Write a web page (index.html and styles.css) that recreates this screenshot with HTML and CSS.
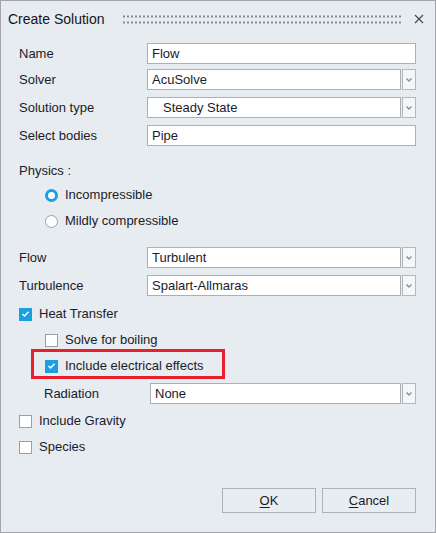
FILE: index.html
```html
<!DOCTYPE html>
<html>
<head>
<meta charset="utf-8">
<link rel="stylesheet" href="styles.css">
</head>
<body>
<div class="window">
  <div class="titlebar">
    <span class="title">Create Solution</span>
    <span class="grip"></span>
    <svg class="close" width="10" height="10" viewBox="0 0 10 10"><path d="M1 1L9 9M9 1L1 9" stroke="#444" stroke-width="1.1" fill="none"/></svg>
  </div>
  <div class="content">
    <div class="row r-name">
      <span class="label">Name</span>
      <div class="input">Flow</div>
    </div>
    <div class="row r-solver">
      <span class="label">Solver</span>
      <div class="combo"><div class="input">AcuSolve</div><div class="drop"><svg width="8" height="6" viewBox="0 0 8 6"><path d="M1.5 1.5L4 4L6.5 1.5" stroke="#8a8f94" stroke-width="1.4" fill="none"/></svg></div></div>
    </div>
    <div class="row r-type">
      <span class="label">Solution type</span>
      <div class="combo"><div class="input indent">Steady State</div><div class="drop"><svg width="8" height="6" viewBox="0 0 8 6"><path d="M1.5 1.5L4 4L6.5 1.5" stroke="#8a8f94" stroke-width="1.4" fill="none"/></svg></div></div>
    </div>
    <div class="row r-bodies">
      <span class="label">Select bodies</span>
      <div class="input">Pipe</div>
    </div>

    <div class="plain physics">Physics :</div>
    <div class="opt sub r-inc"><span class="radio on"></span><span>Incompressible</span></div>
    <div class="opt sub r-mild"><span class="radio"></span><span>Mildly compressible</span></div>

    <div class="row r-flow">
      <span class="label">Flow</span>
      <div class="combo"><div class="input">Turbulent</div><div class="drop"><svg width="8" height="6" viewBox="0 0 8 6"><path d="M1.5 1.5L4 4L6.5 1.5" stroke="#8a8f94" stroke-width="1.4" fill="none"/></svg></div></div>
    </div>
    <div class="row r-turb">
      <span class="label">Turbulence</span>
      <div class="combo"><div class="input">Spalart-Allmaras</div><div class="drop"><svg width="8" height="6" viewBox="0 0 8 6"><path d="M1.5 1.5L4 4L6.5 1.5" stroke="#8a8f94" stroke-width="1.4" fill="none"/></svg></div></div>
    </div>

    <div class="opt r-heat"><span class="check on"><svg width="9" height="8" viewBox="0 0 9 8"><path d="M1.5 4L3.6 6L7.5 1.8" stroke="#fff" stroke-width="1.5" fill="none"/></svg></span><span>Heat Transfer</span></div>
    <div class="opt sub r-boil"><span class="check"></span><span>Solve for boiling</span></div>
    <div class="highlight-wrap">
      <div class="highlight"></div>
      <div class="opt sub r-elec"><span class="check on"><svg width="9" height="8" viewBox="0 0 9 8"><path d="M1.5 4L3.6 6L7.5 1.8" stroke="#fff" stroke-width="1.5" fill="none"/></svg></span><span>Include electrical effects</span></div>
    </div>
    <div class="row r-rad">
      <span class="label sublabel">Radiation</span>
      <div class="combo"><div class="input">None</div><div class="drop"><svg width="8" height="6" viewBox="0 0 8 6"><path d="M1.5 1.5L4 4L6.5 1.5" stroke="#8a8f94" stroke-width="1.4" fill="none"/></svg></div></div>
    </div>
    <div class="opt r-grav"><span class="check"></span><span>Include Gravity</span></div>
    <div class="opt r-spec"><span class="check"></span><span>Species</span></div>

    <div class="buttons">
      <div class="btn"><u>O</u>K</div>
      <div class="btn"><u>C</u>ancel</div>
    </div>
  </div>
</div>
</body>
</html>
```
FILE: styles.css
```css
html, body {
  margin: 0;
  padding: 0;
  background: #e6ecf0;
}
body {
  font-family: "Liberation Sans", Arial, sans-serif;
  font-size: 13px;
  color: #1b1b2b;
}
.window {
  width: 436px;
  height: 533px;
  box-sizing: border-box;
  border: 1px solid #a2a6aa;
  background: #e6ecf0;
  display: flex;
  flex-direction: column;
}
.titlebar {
  height: 37px;
  display: flex;
  align-items: center;
  padding: 0 11px 0 7px;
  box-sizing: border-box;
}
.title {
  font-size: 14px;
  color: #151520;
  padding-bottom: 1px;
}
.grip {
  flex: 1;
  height: 9px;
  margin: 0 12px 0 17px;
  background-image: radial-gradient(circle, #8c8c8c 0.8px, transparent 1.2px);
  background-size: 4px 6px;
  background-position: 0 -1.5px;
}
.close {
  display: block;
  margin-bottom: 2px;
}
.content {
  padding: 4px 19px 0 18px;
  display: flex;
  flex-direction: column;
  flex: 1;
}
.row {
  display: flex;
  align-items: center;
  height: 21px;
}
.label {
  width: 128px;
  flex: none;
  padding-bottom: 1px;
}
.sublabel {
  width: 106px;
  padding-left: 25px;
}
.input {
  flex: 1;
  height: 21px;
  box-sizing: border-box;
  border: 1px solid #aab0b5;
  background: #fff;
  padding: 0 4px;
  display: flex;
  align-items: center;
  font-size: 13px;
  white-space: nowrap;
}
.input.indent {
  padding-left: 15px;
}
.combo {
  flex: 1;
  display: flex;
  gap: 1px;
  height: 21px;
}
.drop {
  width: 14px;
  height: 21px;
  box-sizing: border-box;
  border: 1px solid #b3b8bd;
  background: #f4f6f8;
  display: flex;
  align-items: center;
  justify-content: center;
  flex: none;
}
.drop svg {
  display: block;
}
.r-name { margin-top: 1px; }
.r-solver { margin-top: 5px; }
.r-type { margin-top: 7px; }
.r-bodies { margin-top: 7px; }
.plain {
  height: 16px;
  line-height: 16px;
}
.physics { margin-top: 17px; }
.opt {
  display: flex;
  align-items: center;
  gap: 7px;
  height: 16px;
  line-height: 16px;
}
.opt.sub {
  padding-left: 26px;
}
.r-inc { margin-top: 8px; }
.r-mild { margin-top: 10px; }
.r-flow { margin-top: 18px; }
.r-turb { margin-top: 7px; }
.r-heat { margin-top: 10px; }
.r-boil { margin-top: 10px; }
.highlight-wrap {
  position: relative;
  margin-top: 10px;
}
.highlight {
  position: absolute;
  left: 12px;
  top: -9px;
  width: 194px;
  height: 30px;
  box-sizing: border-box;
  border: 3px solid #e8202e;
}
.r-rad { margin-top: 9px; }
.r-grav { margin-top: 9px; }
.r-spec { margin-top: 10px; }
.radio {
  width: 13px;
  height: 13px;
  box-sizing: border-box;
  border-radius: 50%;
  border: 1px solid #9aa0a6;
  background: #fff;
  flex: none;
}
.radio.on {
  border: 3.5px solid #1a9fe0;
}
.check {
  width: 13px;
  height: 13px;
  box-sizing: border-box;
  border: 1px solid #9a9fa4;
  background: #fff;
  flex: none;
  display: flex;
  align-items: center;
  justify-content: center;
}
.check.on {
  border: none;
  background: #1a9fe0;
}
.check svg { display: block; }
.buttons {
  margin-top: 33px;
  display: flex;
  justify-content: flex-end;
  gap: 6px;
}
.btn {
  width: 94px;
  height: 25px;
  box-sizing: border-box;
  border: 1px solid #adb2b7;
  background: #e8edf1;
  display: flex;
  align-items: center;
  justify-content: center;
  font-size: 13px;
}
.btn u {
  text-decoration-thickness: 1px;
  text-underline-offset: 2px;
}
```
